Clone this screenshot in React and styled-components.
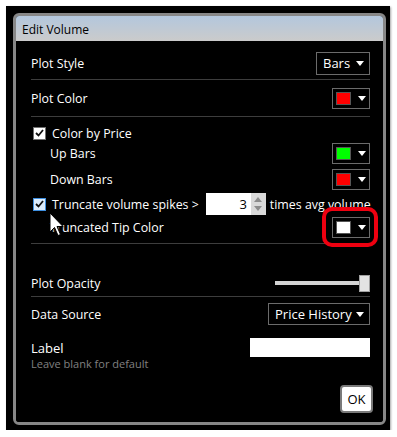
import React from 'react';
import styled, { createGlobalStyle } from 'styled-components';

const GlobalStyle = createGlobalStyle`
  body {
    margin: 0;
    background: #fff;
    font-family: 'Open Sans', 'Noto Sans', sans-serif;
  }
`;

const Frame = styled.div`
  position: relative;
  margin: 6px 0 0 6px;
  width: 373px;
  height: 412px;
  padding: 7px 4px 5px 7px;
  background: #000;
  box-shadow: 1px 1px 2px rgba(0, 0, 0, 0.35);
`;

const Panel = styled.div`
  box-sizing: border-box;
  width: 100%;
  height: 100%;
  border: 3px solid #878787;
  border-radius: 6px;
  display: flex;
  flex-direction: column;
  overflow: hidden;
`;

const TitleBar = styled.div`
  height: 25px;
  flex: none;
  display: flex;
  align-items: center;
  padding: 2px 0 0 6px;
  box-sizing: border-box;
  background: linear-gradient(#b3c7dd, #cbcbcb);
  color: #000;
  font-size: 12px;
`;

const Body = styled.div`
  flex: 1;
  background: #000;
  padding: 6px 13px 0 15px;
  display: flex;
  flex-direction: column;
  color: #fff;
  font-size: 12.4px;
`;

const Row = styled.div`
  display: flex;
  align-items: center;
  justify-content: space-between;
  height: ${(p) => p.$h}px;
  margin-bottom: ${(p) => p.$mb || 0}px;
  padding-left: ${(p) => p.$indent || 0}px;
  flex: none;
`;

const Divider = styled.div`
  height: 1px;
  background: #3d3d3d;
  flex: none;
`;

const Section = styled.div`
  display: flex;
  flex-direction: column;
  padding: ${(p) => p.$pt || 0}px 0 ${(p) => p.$pb || 0}px;
`;

const Label = styled.span`
  white-space: nowrap;
`;

const Dropdown = styled.div`
  box-sizing: border-box;
  width: ${(p) => p.$w}px;
  height: ${(p) => p.$hgt || 23}px;
  border: 1px solid #6b6b6b;
  display: flex;
  align-items: center;
  justify-content: space-between;
  padding: 0 5px 0 6px;
  font-size: 13px;
  color: #fff;
`;

const Arrow = styled.span`
  width: 0;
  height: 0;
  border-left: 4px solid transparent;
  border-right: 4px solid transparent;
  border-top: 5px solid #fff;
`;

const PickerWrap = styled.div`
  position: relative;
`;

const Picker = styled.div`
  box-sizing: border-box;
  width: 38px;
  height: 21px;
  border: 1px solid #6b6b6b;
  display: flex;
  align-items: center;
  justify-content: space-between;
  padding: 0 3px 0 3px;
`;

const Swatch = styled.span`
  width: 15px;
  height: 13px;
  box-sizing: border-box;
  border: 1px solid #555;
  background: ${(p) => p.$c};
`;

const Highlight = styled.div`
  position: absolute;
  left: -10px;
  right: -8px;
  top: -10px;
  bottom: -9px;
  border: 4px solid #ee0010;
  border-radius: 10px;
  pointer-events: none;
`;

const CheckLine = styled.div`
  display: flex;
  align-items: center;
  gap: 6px;
  padding-left: 2px;
  height: ${(p) => p.$h}px;
  margin-bottom: ${(p) => p.$mb || 0}px;
  white-space: nowrap;
`;

const Box = styled.span`
  box-sizing: border-box;
  width: 13px;
  height: 13px;
  flex: none;
  border: 1px solid ${(p) => (p.$focus ? '#3e8fe0' : '#707070')};
  background: ${(p) => (p.$focus ? '#dcecfc' : '#fff')};
  display: flex;
  align-items: center;
  justify-content: center;
`;

const NumberField = styled.div`
  display: flex;
  height: 22px;
  margin-left: 1px;
`;

const NumberInput = styled.div`
  width: 45px;
  background: #fff;
  color: #000;
  font-size: 13px;
  text-align: right;
  padding-right: 4px;
  box-sizing: border-box;
  line-height: 22px;
`;

const Spinner = styled.div`
  width: 15px;
  background: #d9d9d9;
  display: flex;
  flex-direction: column;
  align-items: center;
  justify-content: space-around;
  padding: 2px 0;
  box-sizing: border-box;
`;

const SpinArrow = styled.span`
  width: 0;
  height: 0;
  border-left: 4px solid transparent;
  border-right: 4px solid transparent;
  ${(p) => (p.$up ? 'border-bottom' : 'border-top')}: 5px solid #8c8c8c;
`;

const Trailing = styled.span`
  margin-left: -2px;
  white-space: nowrap;
`;

const Slider = styled.div`
  position: relative;
  width: 95px;
  height: 17px;
  display: flex;
  align-items: center;
`;

const Track = styled.div`
  width: 88px;
  height: 4px;
  background: #d3d3d3;
`;

const Thumb = styled.div`
  position: absolute;
  right: 0;
  top: 0;
  box-sizing: border-box;
  width: 11px;
  height: 17px;
  background: #e3e3e3;
  border: 1px solid #a0a0a0;
`;

const LabelRow = styled.div`
  display: flex;
  justify-content: space-between;
  align-items: flex-start;
  flex: none;
`;

const LabelText = styled.div`
  padding-top: 9px;
  display: flex;
  flex-direction: column;
`;

const Main = styled.span`
  font-size: 13px;
  line-height: 17px;
`;

const Hint = styled.span`
  color: #808080;
  font-size: 11px;
  line-height: 14px;
`;

const TextInput = styled.div`
  margin-top: 7px;
  width: 120px;
  height: 19px;
  background: #fff;
`;

const Footer = styled.div`
  display: flex;
  justify-content: flex-end;
  margin: 14px -3px 0 0;
`;

const OkButton = styled.button`
  box-sizing: border-box;
  width: 33px;
  height: 28px;
  border: 2px solid #7a7a7a;
  border-radius: 4px;
  background: #fff;
  color: #000;
  font-family: inherit;
  font-size: 13px;
  padding: 0;
`;

const Cursor = styled.svg`
  position: absolute;
  left: 43px;
  top: 206px;
  filter: drop-shadow(1px 1px 1px rgba(0, 0, 0, 0.5));
`;

const Check = () => (
  <svg width="9" height="8" viewBox="0 0 9 8">
    <path d="M1 4 L3.5 6.5 L8 1" fill="none" stroke="#111" strokeWidth="1.8" />
  </svg>
);

const ColorPicker = ({ color, highlight }) => (
  <PickerWrap>
    <Picker>
      <Swatch $c={color} />
      <Arrow />
    </Picker>
    {highlight && <Highlight />}
  </PickerWrap>
);

export default function App() {
  return (
    <>
      <GlobalStyle />
      <Frame>
        <Panel>
          <TitleBar>Edit Volume</TitleBar>
          <Body>
            <Section $pt={0}>
              <Row $h={32}>
                <Label>Plot Style</Label>
                <Dropdown $w={54}>
                  Bars
                  <Arrow />
                </Dropdown>
              </Row>
              <Divider />
              <Row $h={36}>
                <Label>Plot Color</Label>
                <ColorPicker color="#ff0000" />
              </Row>
              <Divider />
            </Section>

            <Section $pt={6} $pb={5}>
              <CheckLine $h={20}>
                <Box>
                  <Check />
                </Box>
                Color by Price
              </CheckLine>
              <Row $h={21} $mb={5} $indent={19}>
                <Label>Up Bars</Label>
                <ColorPicker color="#00ff00" />
              </Row>
              <Row $h={21} $mb={3} $indent={19}>
                <Label>Down Bars</Label>
                <ColorPicker color="#ff0000" />
              </Row>
              <CheckLine $h={22} $mb={2}>
                <Box $focus>
                  <Check />
                </Box>
                Truncate volume spikes &gt;
                <NumberField>
                  <NumberInput>3</NumberInput>
                  <Spinner>
                    <SpinArrow $up />
                    <SpinArrow />
                  </Spinner>
                </NumberField>
                <Trailing>times avg volume</Trailing>
              </CheckLine>
              <Row $h={21} $indent={19}>
                <Label>Truncated Tip Color</Label>
                <ColorPicker color="#ffffff" highlight />
              </Row>
            </Section>
            <Divider />

            <Section $pt={26}>
              <Row $h={26}>
                <Label>Plot Opacity</Label>
                <Slider>
                  <Track />
                  <Thumb />
                </Slider>
              </Row>
              <Divider />
              <Row $h={34}>
                <Label>Data Source</Label>
                <Dropdown $w={102} $hgt={22}>
                  Price History
                  <Arrow />
                </Dropdown>
              </Row>
              <LabelRow>
                <LabelText>
                  <Main>Label</Main>
                  <Hint>Leave blank for default</Hint>
                </LabelText>
                <TextInput />
              </LabelRow>
            </Section>

            <Footer>
              <OkButton>OK</OkButton>
            </Footer>
          </Body>
        </Panel>
        <Cursor width="16" height="26" viewBox="0 0 16 26">
          <path
            d="M1 1 L1 20 L5.5 15.5 L9 23.5 L11.5 22.5 L8 14.5 L14 14.5 Z"
            fill="#fff"
            stroke="#000"
            strokeWidth="1"
            strokeLinejoin="round"
          />
        </Cursor>
      </Frame>
    </>
  );
}
